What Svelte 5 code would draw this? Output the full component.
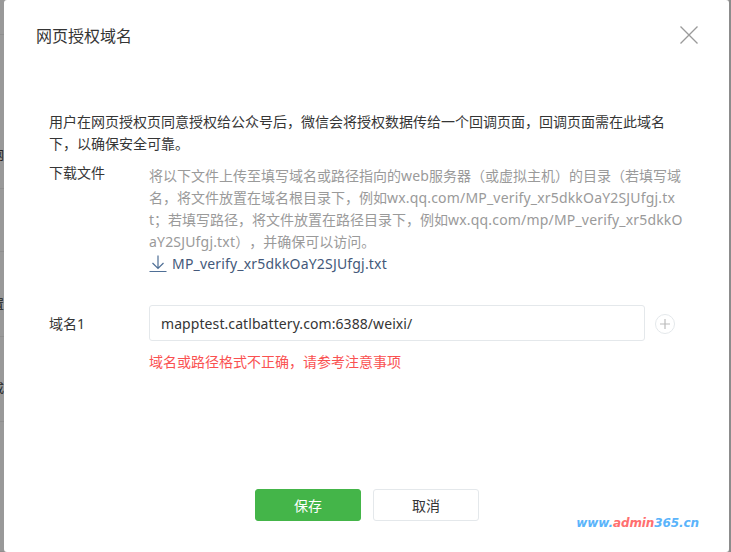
<script>
  const hint = [
    ["将以下文件上传至填写域名或路径指向的", "web", "服务器（或虚拟主机）的目录（若填写域"],
    ["名，将文件放置在域名根目录下，例如", "wx.qq.com/MP_verify_xr5dkkOaY2SJUfgj.tx", ""],
    ["t；若填写路径，将文件放置在路径目录下，例如", "wx.qq.com/mp/MP_verify_xr5dkkO", ""],
    ["", "aY2SJUfgj.txt", "），并确保可以访问。"]
  ];
  // table rows showing behind the mask
  const rows = [
    { h: 35, top: 0, text: "" },
    { h: 154, top: 114, text: "网" },
    { h: 63, top: 0, text: "" },
    { h: 85, top: 46, text: "置" },
    { h: 85, top: 45, text: "成" },
    { h: 130, top: 0, text: "" }
  ];
</script>

<div class="page">
  <div class="edge">
    {#each rows as row}
      <div class="edge-row" style="height:{row.h}px;padding-top:{row.top}px">{row.text}</div>
    {/each}
  </div>

  <div class="dialog">
    <header class="head">
      <h3>网页授权域名</h3>
      <button class="close" aria-label="关闭">
        <svg width="18" height="18" viewBox="0 0 18 18">
          <path d="M.5.5l17 17M17.500.5l-17 17" fill="none" stroke="#9a9a9a" stroke-width="1.300" />
        </svg>
      </button>
    </header>

    <div class="body">
      <p class="intro">
        用户在网页授权页同意授权给公众号后，微信会将授权数据传给一个回调页面，回调页面需在此域名<br />下，以确保安全可靠。
      </p>

      <div class="row download">
        <span class="label">下载文件</span>
        <div class="desc">
          {#each hint as [before, latin, after]}
            <div class="line">{before}<span class="latin">{latin}</span>{after}</div>
          {/each}
          <a class="file" href="#top">
            <svg width="18" height="18" viewBox="0 0 18 18">
              <path d="M9 .5v13M3.500 8L9 13.500 14.500 8M.5 16.500h17" fill="none" stroke="#4f6f96" stroke-width="1.200" />
            </svg>
            <span class="latin">MP_verify_xr5dkkOaY2SJUfgj.txt</span>
          </a>
        </div>
      </div>

      <div class="row domain">
        <span class="label">域名1</span>
        <div class="field">
          <input value="mapptest.catlbattery.com:6388/weixi/" />
          <button class="add" aria-label="添加">
            <svg width="20" height="20" viewBox="0 0 20 20">
              <circle cx="10" cy="10" r="9.500" fill="#fff" stroke="#e4e8eb" />
              <path d="M5 10h10M10 5v10" stroke="#bbb" stroke-width="1.200" />
            </svg>
          </button>
        </div>
      </div>
      <div class="error">域名或路径格式不正确，请参考注意事项</div>
    </div>

    <footer class="foot">
      <button class="btn primary">保存</button>
      <button class="btn">取消</button>
    </footer>

    <div class="mark">www.<b>admin</b>365.cn</div>
  </div>

  <div class="edge right"></div>
</div>

<style>
  :global(body) {
    background: #999;
  }
  .page {
    display: flex;
    width: 731px;
    height: 552px;
    overflow: hidden;
    font-family: "Noto Sans", "Noto Sans CJK SC", sans-serif;
    font-size: 14px;
    color: #353535;
    text-spacing-trim: space-all;
    font-feature-settings: "chws" 0;
  }
  .edge {
    width: 4px;
    flex: none;
    overflow: hidden;
    background: #999;
  }
  .edge.right {
    width: 2px;
    background: #8c8c8c;
  }
  .edge-row {
    display: flex;
    justify-content: flex-end;
    align-items: flex-start;
    box-sizing: border-box;
    border-bottom: 1px solid #8f8f8f;
    font-size: 12px;
    line-height: 14px;
    color: #222;
  }
  .dialog {
    position: relative;
    width: 725px;
    flex: none;
    display: flex;
    flex-direction: column;
    background: #fff;
    border-radius: 3px;
  }
  .head {
    display: flex;
    justify-content: space-between;
    align-items: center;
    height: 70px;
    padding: 0 31px 0 32px;
  }
  h3 {
    margin: 0;
    font-size: 16px;
    font-weight: 400;
  }
  .close {
    display: flex;
    padding: 0;
    border: 0;
    background: none;
  }
  .body {
    flex: 1;
    padding: 41px 0 0 45px;
  }
  .intro {
    margin: 0;
    line-height: 22px;
  }
  .row {
    display: flex;
  }
  .label {
    width: 100px;
    flex: none;
  }
  .download {
    margin-top: 7px;
    line-height: 22px;
  }
  .desc {
    color: #9a9a9a;
    padding-top: 3px;
  }
  .line {
    white-space: nowrap;
  }
  .latin {
    letter-spacing: 0.18px;
  }
  .file {
    display: flex;
    align-items: center;
    gap: 5px;
    height: 22px;
    color: #44597a;
    text-decoration: none;
  }
  .domain {
    margin-top: 30px;
    align-items: center;
  }
  .field {
    display: flex;
    align-items: center;
    gap: 10px;
  }
  input {
    width: 496px;
    height: 36px;
    box-sizing: border-box;
    padding: 0 11px;
    border: 1px solid #e4e8eb;
    border-radius: 3px;
    font: inherit;
    letter-spacing: 0.08px;
    color: #353535;
    outline: none;
  }
  .add {
    display: flex;
    margin-top: 2px;
    padding: 0;
    border: 0;
    background: none;
  }
  .error {
    margin: 11px 0 0 100px;
    line-height: 20px;
    color: #fa5151;
  }
  .foot {
    display: flex;
    justify-content: center;
    gap: 12px;
    padding: 0 0 31px 1px;
  }
  .btn {
    width: 106px;
    height: 32px;
    box-sizing: border-box;
    border: 1px solid #e4e8eb;
    border-radius: 3px;
    background: #fff;
    font: inherit;
    color: #353535;
  }
  .btn.primary {
    border-color: #44b549;
    background: #44b549;
    color: #fff;
  }
  .mark {
    position: absolute;
    right: 30px;
    bottom: 20px;
    font: italic 700 12px/18px "DejaVu Sans", sans-serif;
    letter-spacing: -0.1px;
    color: #5ab4fb;
  }
  .mark b {
    color: #ff6f6f;
  }
</style>
